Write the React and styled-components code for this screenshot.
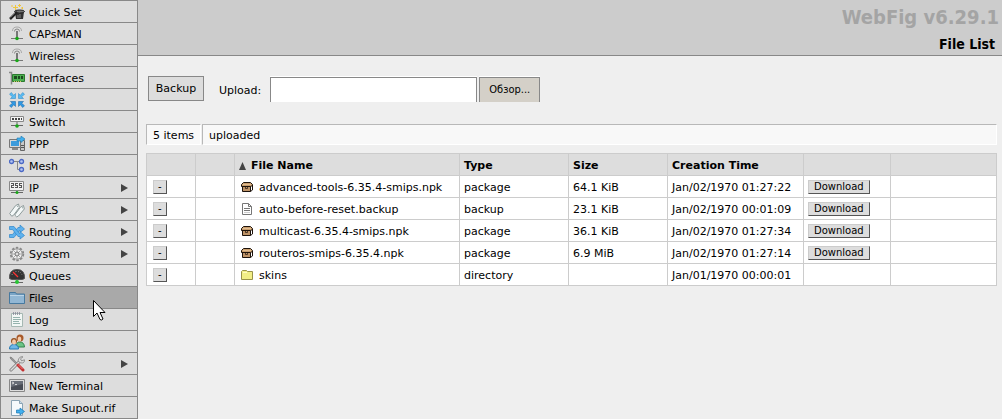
import styled, { createGlobalStyle } from 'styled-components';

const GlobalStyle = createGlobalStyle`
  * {
    box-sizing: border-box;
  }

  body {
    margin: 0;
    background: #efefef;
    color: #000;
    font: 11px/14px "DejaVu Sans", sans-serif;
  }

  button, input {
    font: inherit;
    color: inherit;
  }
`;

const Page = styled.div`
  display: flex;
  min-height: 100vh;
  align-items: flex-start;
`;

const Menu = styled.nav`
  flex: 0 0 138px;
  border: 1px solid #888;
  border-bottom: none;
  position: relative;
`;

const MenuItem = styled.a`
  display: flex;
  align-items: center;
  height: 22px;
  padding: 1px 9px 0 8px;
  gap: 4px;
  border-bottom: 1px solid #888;
  background: ${({ $active }) => ($active ? '#a9a9a9' : '#ddd')};
  color: #000;
  text-decoration: none;

  span {
    flex: 1;
    padding-top: 2px;
  }
`;

const Icon = styled.svg`
  flex: none;
  width: 16px;
  height: 16px;
`;

const Arrow = styled.svg`
  flex: none;
  width: 8px;
  height: 8px;
  fill: #444;
`;

const Cursor = styled.svg`
  position: absolute;
  left: 92px;
  top: 299px;
  width: 13px;
  height: 21px;
`;

const Main = styled.main`
  flex: 1;
  min-width: 0;
`;

const Header = styled.header`
  display: flex;
  flex-direction: column;
  height: 56px;
  padding: 4px 3px 0;
  border-bottom: 1px solid #888;
  background: #ccc;
  text-align: right;
  font-family: "DejaVu Sans Condensed", "DejaVu Sans", sans-serif;
  font-weight: bold;
`;

const Brand = styled.div`
  color: #a4a4a4;
  font-size: 20px;
  line-height: 26px;
`;

const Title = styled.h1`
  margin: 4px 4px 0;
  font-size: 14px;
  line-height: 20px;
`;

const Content = styled.div`
  padding: 20px 5px 0 8px;
`;

const Toolbar = styled.form`
  display: flex;
  align-items: center;
  padding-left: 2px;
  height: 27px;
`;

const BackupButton = styled.button`
  align-self: flex-start;
  width: 56px;
  height: 25px;
  padding: 0;
  border: 1px solid #888;
  background: #ddd;
`;

const UploadLabel = styled.label`
  margin: 2px 9px 0 15px;
`;

const UploadInput = styled.input`
  width: 207px;
  height: 25px;
  border: 1px solid #888;
  border-bottom: none;
  background: #fff;
  box-shadow: 0 -1px #fff;
`;

const BrowseButton = styled.button`
  width: 61px;
  height: 25px;
  margin-left: 2px;
  padding: 0;
  border: 1px solid #888;
  border-bottom: none;
  background: #d4d0c8;
  box-shadow: 0 -1px #fff;
  font-family: "DejaVu Sans Condensed", "DejaVu Sans", sans-serif;
`;

const Status = styled.div`
  display: flex;
  gap: 1px;
  height: 21px;
  margin: 21px 0 8px;
`;

const StatusCell = styled.div`
  flex: ${({ $grow }) => ($grow ? '1' : 'none')};
  padding: 4px 6px 0;
  border: 1px solid #b8b8b8;
  border-right-color: #fff;
  border-bottom-color: #fff;
  background: #f8f8f8;
`;

const Table = styled.table`
  width: 100%;
  table-layout: fixed;
  border-collapse: collapse;
  background: #fff;
`;

const Col = styled.col`
  width: ${({ $width }) => ($width ? `${$width}px` : 'auto')};
`;

const Cell = styled.td`
  height: 22px;
  padding: 3px 0 0 4px;
  border: 1px solid #ccc;
  text-align: left;
  white-space: nowrap;
`;

const HeadCell = styled(Cell).attrs({ as: 'th', scope: 'col' })`
  background: #ddd;
`;

const ActionCell = styled(Cell)`
  padding-top: 1px;
`;

const NameCell = styled.div`
  display: flex;
  align-items: center;
  gap: 4px;
`;

const SortLabel = styled.div`
  display: flex;
  align-items: center;
  gap: 4px;
`;

const SmallButton = styled.button`
  display: block;
  height: 14px;
  padding: 0 5px;
  border: 1px solid #ccc;
  border-right-color: #555;
  border-bottom-color: #555;
  background: #ddd;
  line-height: 12px;
  font-size: 10px;
`;

const RemoveButton = styled(SmallButton)`
  margin-left: 2px;
  padding: 0 4px;
`;

const icons = {
  wand: (
    <>
      <path d="M6 8h9l-1 7H7z" fill="#333" />
      <ellipse cx="10.500" cy="7.500" rx="5" ry="1.500" fill="#777" stroke="#222" />
      <path d="M1 15l7-7" stroke="#222" strokeWidth="2.500" />
      <path d="M1.500 13.500L6 9" stroke="#888" strokeWidth=".7" />
      <path d="M9 11v3M11 10v4" stroke="#888" />
      <path d="M6.500 1v5M4 3.500h5M10.500 0v3M9 1.500h3M13.500 3v2M3 1v2M12 4h2" stroke="#f0c63c" />
    </>
  ),
  antenna: (
    <>
      <path d="M3.500 5q0-4 4.500-4t4.500 4" fill="none" stroke="#aaa" />
      <path d="M5.500 5.500Q5.500 3 8 3t2.500 2.500" fill="none" stroke="#888" />
      <path d="M8 5v7" stroke="#777" strokeWidth="2" />
      <path d="M2 12.500h12" stroke="#777" />
      <circle cx="8" cy="12.500" r="1.800" fill="#18a818" />
    </>
  ),
  card: (
    <>
      <path d="M0 2.500h2.500v12" fill="none" stroke="#888" strokeWidth="1.500" />
      <path d="M3.500 4.500h12v7h-12z" fill="#4caf50" stroke="#2c7a30" />
      <path d="M5 6h3v3H5zM9 6h2v3H9zM12 6h2v3h-2z" fill="#1d4a20" />
      <path d="M5 11.500h8" stroke="#d0c860" strokeDasharray="1 1" />
    </>
  ),
  bridge: (
    <g strokeWidth=".5">
      <g fill="#5bbcf2" stroke="#2583c4">
        <path d="M6.500 6.500v-5L4.700 3.300 2.300.5.5 2.300l2.800 2.400-1.800 1.800z" />
        <path d="M9.500 6.500v-5l1.800 1.800L13.700.5l1.800 1.800-2.800 2.400 1.800 1.800z" />
      </g>
      <g fill="#2f9ae6" stroke="#125f9f">
        <path d="M6.500 9.500v5l-1.800-1.800-2.400 2.800-1.800-1.800 2.800-2.400-1.800-1.800z" />
        <path d="M9.500 9.500v5l1.800-1.800 2.400 2.800 1.800-1.800-2.800-2.400 1.800-1.800z" />
      </g>
    </g>
  ),
  switch: (
    <>
      <path d="M1.500 2.500h13v5h-13z" fill="#f4f4f4" stroke="#888" />
      <path d="M3 5h10" stroke="#444" strokeWidth="2" strokeDasharray="2 1" />
      <path d="M8 8v4M2 11.500h12" stroke="#666" />
      <circle cx="8" cy="12" r="1.800" fill="#18a818" />
    </>
  ),
  ppp: (
    <>
      <path d="M11.500 4.500h4v10h-4z" fill="#c8c8c8" stroke="#666" />
      <path d="M.5 3.500h11v8H.5z" fill="#d8d8d8" stroke="#777" />
      <path d="M2 5h8v5H2z" fill="#3c9bdc" />
      <path d="M3 12h6v2H3z" fill="#888" />
      <path d="M8 2h4V0l4 3-4 3.500V5H8z" fill="#43b0ee" stroke="#1775b0" strokeWidth=".6" />
      <path d="M12 9.500h3M12 11.500h3" stroke="#555" />
    </>
  ),
  mesh: (
    <>
      <path d="M5 3.500h6M8.500 4v7.500h3" fill="none" stroke="#888" />
      <g fill="#b5c6f2" stroke="#4b68c4" strokeWidth="1.300">
        <circle cx="2.500" cy="3.500" r="2" />
        <circle cx="12.500" cy="3.500" r="2" />
        <circle cx="12.500" cy="11.500" r="2" />
      </g>
    </>
  ),
  ip: (
    <>
      <path d="M.5 1.500h14v9H.5z" fill="#f2f2f2" stroke="#888" />
      <path
        d="M2 3.500h3M4.500 3v3M2 5.500h3M2.500 5v3M2 7.500h3M6 3.500h3M6.500 3v3M6 5.500h3M8.500 5v3M6 7.500h3M10 3.500h3M10.500 3v3M10 5.500h3M12.500 5v3M10 7.500h3"
        stroke="#555"
        shapeRendering="crispEdges"
      />
      <path d="M8 11v2M2 12.500h12" stroke="#666" />
      <circle cx="8" cy="12.500" r="1.500" fill="#18a818" />
    </>
  ),
  labels: (
    <g fill="#f4f8f8" stroke="#839292" strokeWidth=".9">
      <path d="M.7 11.500L6.500 3.700 9.500 2l.8 3.500-5.800 7.800-1.800.9z" />
      <path d="M5.700 13L11.500 5.200 14.500 3.500l.8 3.500-5.800 7-1.800.9z" />
      <path d="M8.500 3.800v1M13.500 5.300v1" />
    </g>
  ),
  routing: (
    <g fill="#5fb2ee" stroke="#2f86ca" strokeWidth=".7">
      <path d="M.5 10.500h3l5.500-7h2V1L15.500 5 11 8.500V6.500h-.7l-5.300 7H.5z" />
      <path d="M.5 2.500h4.500l5.300 7h.7V7.500l4.500 4L11 15v-2.500H9l-5.500-7h-3z" />
    </g>
  ),
  gear: (
    <>
      <circle cx="8" cy="8" r="6.200" fill="none" stroke="#888" strokeWidth="2" strokeDasharray="2.400 1.500" />
      <circle cx="8" cy="8" r="5.200" fill="#eee" stroke="#999" />
      <path d="M8 3v10M3 8h10M4.500 4.500l7 7M11.500 4.500l-7 7" stroke="#aaa" />
      <circle cx="8" cy="8" r="2" fill="#ddd" stroke="#777" />
    </>
  ),
  queues: (
    <>
      <path d="M.5 10.500Q0 1.500 8 1.500t7.500 9l-2 1h-11z" fill="#333" stroke="#555" />
      <path d="M3 7q1-3.500 5-3.500T13 7" fill="none" stroke="#999" strokeDasharray="1 1.500" />
      <path d="M4 4l5 5" stroke="#f33" strokeWidth="1.200" />
      <path d="M8 11v3M2 14.500h12" stroke="#666" />
      <circle cx="8" cy="14" r="2" fill="#27c633" />
    </>
  ),
  folder: (
    <>
      <path d="M.5 13.500v-11h6l1 1.500h8v9.500z" fill="#7ba5c6" stroke="#47799f" />
      <path d="M1 5.500h14V13H1z" fill="#92b7d4" />
      <path d="M1 5.500h14" stroke="#bcd5e8" />
    </>
  ),
  log: (
    <>
      <path d="M2.500 1.500h11v13h-11z" fill="#f2f7f5" stroke="#a6b8b3" />
      <path d="M4.500 0v3M6.500 0v3M8.500 0v3M10.500 0v3" stroke="#889" strokeWidth=".8" />
      <path d="M4 5.500h7M4 7.500h8M4 9.500h6M4 11.500h7" stroke="#95b3ae" />
    </>
  ),
  users: (
    <>
      <path d="M7 13q0-5 4-5t4.500 5z" fill="#6cc487" stroke="#30854a" />
      <circle cx="11" cy="4" r="3.500" fill="#a85a2a" />
      <ellipse cx="10.500" cy="5" rx="1.800" ry="2.500" fill="#f5cba9" />
      <path d="M.5 15q0-4.500 4.500-4.500T9.500 15z" fill="#6fb8e8" stroke="#2778b2" />
      <circle cx="5" cy="7" r="3" fill="#96501f" />
      <ellipse cx="5" cy="8" rx="2" ry="2.700" fill="#f5cba9" />
    </>
  ),
  tools: (
    <>
      <path d="M1 1l2 .7 6 6.300-1 1L1.700 3z" fill="#999" stroke="#666" strokeWidth=".5" />
      <path d="M2 14l9-9" stroke="#777" strokeWidth="3" strokeLinecap="round" />
      <path d="M2 14l9-9" stroke="#ddd" strokeWidth="1.500" strokeLinecap="round" />
      <path d="M14 .8l-2.500 2 1 2 3-1q0 4-4 3L9 5q1-5 5-4.200z" fill="#ddd" stroke="#777" strokeWidth=".7" />
      <path d="M9 9l5 5" stroke="#c23030" strokeWidth="3" strokeLinecap="round" />
      <path d="M9 8.500l4.500 4.500" stroke="#f17c7c" />
    </>
  ),
  terminal: (
    <>
      <path d="M.5 1.500h15v12H.5z" fill="#ddd" stroke="#888" />
      <path d="M2 3h12v9H2z" fill="#484c55" />
      <path d="M2 3h12v3L2 9z" fill="#686d77" />
      <path d="M3 4l2 1-2 1M6 6.500h2" fill="none" stroke="#eee" strokeWidth=".8" />
    </>
  ),
  supout: (
    <>
      <path d="M2.500.5h8l3 3v12h-11z" fill="#f4f9fc" stroke="#8aa3b4" />
      <path d="M10.500.5v3h3" fill="#c9dce9" stroke="#8aa3b4" />
      <path d="M7.500 10H11V8l4.500 3.500L11 15v-2H7.500z" fill="#43b0ee" stroke="#1875b3" strokeWidth=".7" />
    </>
  ),
  package: (
    <>
      <path d="M3.500 6.500h8v5h-8z" fill="#be9367" stroke="#1c120b" />
      <path d="M2.500 6.500v-2l2-2h7l2 2v1l-2 1z" fill="#c79c6c" stroke="#1c120b" />
      <path d="M11.500 11.500l2-1.500V5" fill="none" stroke="#1c120b" />
      <path d="M4 4.500h8" stroke="#e0bd92" />
      <path d="M6.500 7v1.500h2V7" fill="none" stroke="#1c120b" strokeWidth=".7" />
    </>
  ),
  file: (
    <>
      <path d="M3.500 1.500h6l3 3v8h-9z" fill="#fff" stroke="#777" />
      <path d="M9.500 1.500v3h3M5 6.500h6M5 8.500h6" fill="none" stroke="#777" />
      <path d="M5 10.500h6" stroke="#ccc" />
    </>
  ),
  directory: (
    <>
      <path d="M2.500 11.500v-8l1-1h4l1 1h5v8z" fill="#f2ee86" stroke="#99924a" />
      <path d="M4 4.500h4" stroke="#fffbc2" />
    </>
  ),
};

const menu = [
  { label: 'Quick Set', icon: 'wand' },
  { label: 'CAPsMAN', icon: 'antenna' },
  { label: 'Wireless', icon: 'antenna' },
  { label: 'Interfaces', icon: 'card' },
  { label: 'Bridge', icon: 'bridge' },
  { label: 'Switch', icon: 'switch' },
  { label: 'PPP', icon: 'ppp' },
  { label: 'Mesh', icon: 'mesh' },
  { label: 'IP', icon: 'ip', submenu: true },
  { label: 'MPLS', icon: 'labels', submenu: true },
  { label: 'Routing', icon: 'routing', submenu: true },
  { label: 'System', icon: 'gear', submenu: true },
  { label: 'Queues', icon: 'queues' },
  { label: 'Files', icon: 'folder', active: true },
  { label: 'Log', icon: 'log' },
  { label: 'Radius', icon: 'users' },
  { label: 'Tools', icon: 'tools', submenu: true },
  { label: 'New Terminal', icon: 'terminal' },
  { label: 'Make Supout.rif', icon: 'supout' },
];

const files = [
  { name: 'advanced-tools-6.35.4-smips.npk', type: 'package', size: '64.1 KiB', time: 'Jan/02/1970 01:27:22' },
  { name: 'auto-before-reset.backup', type: 'backup', size: '23.1 KiB', time: 'Jan/02/1970 00:01:09' },
  { name: 'multicast-6.35.4-smips.npk', type: 'package', size: '36.1 KiB', time: 'Jan/02/1970 01:27:34' },
  { name: 'routeros-smips-6.35.4.npk', type: 'package', size: '6.9 MiB', time: 'Jan/02/1970 01:27:14' },
  { name: 'skins', type: 'directory', size: '', time: 'Jan/01/1970 00:00:01' },
];

const fileIcons = { package: 'package', backup: 'file', directory: 'directory' };

const columnWidths = [49, 39, 225, 109, 99, 136, 87, 0];

function Glyph({ name }) {
  return <Icon viewBox="0 0 16 16" aria-hidden="true">{icons[name]}</Icon>;
}

function Sidebar() {
  return (
    <Menu>
      {menu.map(({ label, icon, submenu, active }) => (
        <MenuItem key={label} href="#" $active={active}>
          <Glyph name={icon} />
          <span>{label}</span>
          {submenu && <Arrow viewBox="0 0 8 8"><path d="M1 0l7 4-7 4z" /></Arrow>}
        </MenuItem>
      ))}
      <Cursor viewBox="0 0 13 21">
        <path d="M.5.500v16l3.500-3.500 3 6.500 1.500.5 1.500-1-3-6.500h5z" fill="#fff" stroke="#000" />
      </Cursor>
    </Menu>
  );
}

function FileTable() {
  return (
    <Table>
      <colgroup>
        {columnWidths.map((width, index) => <Col key={index} $width={width} />)}
      </colgroup>
      <thead>
        <tr>
          <HeadCell />
          <HeadCell />
          <HeadCell>
            <SortLabel>
              <Arrow viewBox="0 0 8 8"><path d="M3.500 0L7 8H0z" /></Arrow>
              File Name
            </SortLabel>
          </HeadCell>
          <HeadCell>Type</HeadCell>
          <HeadCell>Size</HeadCell>
          <HeadCell>Creation Time</HeadCell>
          <HeadCell />
          <HeadCell />
        </tr>
      </thead>
      <tbody>
        {files.map(({ name, type, size, time }) => (
          <tr key={name}>
            <ActionCell>
              <RemoveButton type="button" aria-label={`Remove ${name}`}>-</RemoveButton>
            </ActionCell>
            <Cell />
            <Cell>
              <NameCell>
                <Glyph name={fileIcons[type]} />
                {name}
              </NameCell>
            </Cell>
            <Cell>{type}</Cell>
            <Cell>{size}</Cell>
            <Cell>{time}</Cell>
            <ActionCell>
              {type !== 'directory' && <SmallButton type="button">Download</SmallButton>}
            </ActionCell>
            <Cell />
          </tr>
        ))}
      </tbody>
    </Table>
  );
}

export default function App() {
  return (
    <Page>
      <GlobalStyle />
      <Sidebar />
      <Main>
        <Header>
          <Brand>WebFig v6.29.1</Brand>
          <Title>File List</Title>
        </Header>
        <Content>
          <Toolbar>
            <BackupButton type="button">Backup</BackupButton>
            <UploadLabel htmlFor="upload">Upload:</UploadLabel>
            <UploadInput id="upload" type="text" />
            <BrowseButton type="button">Обзор...</BrowseButton>
          </Toolbar>
          <Status>
            <StatusCell>5 items</StatusCell>
            <StatusCell $grow>uploaded</StatusCell>
          </Status>
          <FileTable />
        </Content>
      </Main>
    </Page>
  );
}
